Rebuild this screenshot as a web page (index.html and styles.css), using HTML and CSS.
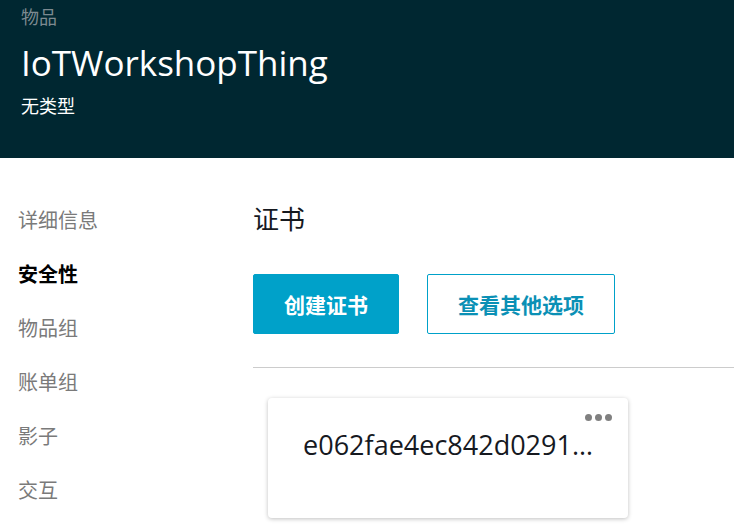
FILE: index.html
```html
<!DOCTYPE html>
<html lang="zh-CN">
<head>
<meta charset="utf-8">
<link rel="stylesheet" href="styles.css">
</head>
<body>
<header class="header">
  <div class="crumb">物品</div>
  <h1 class="title">IoTWorkshopThing</h1>
  <div class="subtitle">无类型</div>
</header>
<div class="layout">
  <nav class="sidebar">
    <a class="nav-item">详细信息</a>
    <a class="nav-item active">安全性</a>
    <a class="nav-item">物品组</a>
    <a class="nav-item">账单组</a>
    <a class="nav-item">影子</a>
    <a class="nav-item">交互</a>
  </nav>
  <main class="main">
    <h2 class="section-title">证书</h2>
    <div class="actions">
      <button class="btn btn-primary">创建证书</button>
      <button class="btn btn-secondary">查看其他选项</button>
    </div>
    <hr class="divider">
    <div class="cards">
      <div class="card">
        <div class="card-menu"><span></span><span></span><span></span></div>
        <div class="card-title">e062fae4ec842d0291…</div>
      </div>
    </div>
  </main>
</div>
</body>
</html>
```
FILE: styles.css
```css
* { box-sizing: border-box; }
html, body { margin: 0; padding: 0; }
body {
  width: 734px;
  height: 529px;
  overflow: hidden;
  background: #ffffff;
  font-family: "Open Sans", "Noto Sans CJK SC", sans-serif;
  color: #16191f;
}
.header {
  background: #002731;
  height: 158px;
  padding: 4px 21px 0;
}
.crumb {
  color: #7d8a90;
  font-size: 18px;
  line-height: 26px;
}
.title {
  margin: 12px 0 0;
  font-weight: 400;
  font-size: 35px;
  line-height: 42px;
  color: #ffffff;
}
.subtitle {
  color: #ffffff;
  font-size: 18px;
  line-height: 24px;
  margin-top: 10px;
}
.layout {
  display: flex;
}
.sidebar {
  width: 253px;
  flex: none;
  display: flex;
  flex-direction: column;
  padding: 48px 0 0 18px;
}
.nav-item {
  font-size: 20px;
  line-height: 30px;
  height: 54px;
  color: #7a7a7a;
}
.nav-item.active {
  color: #000000;
  font-weight: 700;
}
.main {
  flex: 1;
  padding-top: 44px;
}
.section-title {
  margin: 0;
  font-weight: 400;
  font-size: 26px;
  line-height: 34px;
  color: #16191f;
}
.actions {
  display: flex;
  gap: 28px;
  margin-top: 38px;
}
.btn {
  height: 60px;
  border-radius: 2px;
  font-family: "Noto Sans CJK SC", sans-serif;
  font-size: 21px;
  font-weight: 700;
  cursor: pointer;
}
.btn-primary {
  width: 146px;
  background: #00a1c9;
  border: 1px solid #00a1c9;
  color: #ffffff;
}
.btn-secondary {
  width: 188px;
  background: #ffffff;
  border: 1px solid #00a1c9;
  color: #0a90b5;
}
.divider {
  margin: 33px 0 0;
  border: 0;
  border-top: 1px solid #cccccc;
}
.cards {
  padding: 30px 0 0 15px;
}
.card {
  position: relative;
  width: 360px;
  height: 120px;
  border-radius: 4px;
  background: #fff;
  box-shadow: 0 1px 4px rgba(0,0,0,0.25);
  padding-top: 29px;
  text-align: center;
}
.card-title {
  font-size: 27px;
  line-height: 36px;
  color: #16191f;
  white-space: nowrap;
}
.card-menu {
  position: absolute;
  top: 16px;
  right: 16px;
  display: flex;
  gap: 3px;
}
.card-menu span {
  width: 7px;
  height: 7px;
  border-radius: 50%;
  background: #808080;
}
```
